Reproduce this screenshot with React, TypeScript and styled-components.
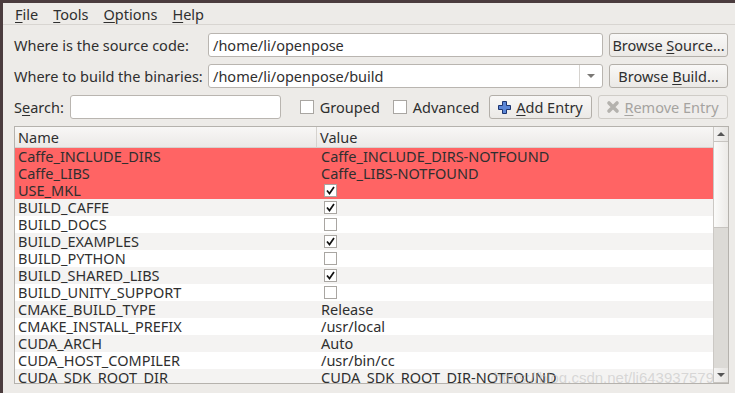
import React from 'react';
import styled, { createGlobalStyle } from 'styled-components';

const GlobalStyle = createGlobalStyle`
  html, body {
    margin: 0;
    padding: 0;
    background: #4b3c3e;
    overflow: hidden;
  }
  * {
    box-sizing: border-box;
  }
`;

const font = `"Noto Sans", "DejaVu Sans", sans-serif`;

const Desktop = styled.div`
  width: 735px;
  height: 393px;
  padding: 3px 0 0 3px;
  background: #4b3c3e;
`;

const Window = styled.div`
  width: 732px;
  height: 390px;
  background: #edebe8;
  font-family: ${font};
  font-size: 14.5px;
  color: #2f2f2f;
  display: flex;
  flex-direction: column;
  overflow: hidden;
`;

const MenuBar = styled.div`
  height: 22px;
  display: flex;
  align-items: center;
  gap: 15px;
  padding-left: 12px;
  border-bottom: 1px solid #d8d5d1;
  flex-shrink: 0;
`;

const MenuItem = styled.span`
  line-height: 20px;
`;

const Key = styled.u`
  text-decoration-thickness: 1px;
  text-underline-offset: 2px;
`;

const Content = styled.div`
  display: flex;
  flex-direction: column;
  gap: 7px;
  padding: 8px 4px 0 11px;
`;

const PathGrid = styled.div`
  display: grid;
  grid-template-columns: 188px 395px 119px;
  column-gap: 6px;
  row-gap: 7px;
  align-items: center;
`;

const Label = styled.span`
  white-space: nowrap;
  flex-shrink: 0;
`;

const TextField = styled.div<{ $width?: number; $gap?: number }>`
  height: 24px;
  ${p => (p.$width ? `width: ${p.$width}px;` : '')}
  margin-left: ${p => p.$gap ?? 0}px;
  flex-shrink: 0;
  background: #ffffff;
  border: 1px solid #b9b5b0;
  border-radius: 3px;
  display: flex;
  align-items: center;
  padding-left: 4px;
  white-space: nowrap;
  overflow: hidden;
`;

const ComboText = styled.span`
  flex: 1;
`;

const ComboArrow = styled.div`
  width: 23px;
  height: 100%;
  border-left: 1px solid #d6d3cf;
  display: flex;
  align-items: center;
  justify-content: center;
  &::after {
    content: '';
    border-left: 4px solid transparent;
    border-right: 4px solid transparent;
    border-top: 4px solid #7a7875;
  }
`;

const Button = styled.div<{ $disabled?: boolean; $width?: number; $gap?: number }>`
  height: 24px;
  ${p => (p.$width ? `width: ${p.$width}px;` : '')}
  margin-left: ${p => p.$gap ?? 0}px;
  flex-shrink: 0;
  border: 1px solid ${p => (p.$disabled ? '#cfccc7' : '#b3afa9')};
  border-radius: 3px;
  background: ${p => (p.$disabled ? '#efedeb' : 'linear-gradient(#f9f8f7, #ebe9e6)')};
  color: ${p => (p.$disabled ? '#a5a3a0' : '#2f2f2f')};
  display: flex;
  align-items: center;
  justify-content: center;
  gap: 4px;
  white-space: nowrap;
`;

const ToolRow = styled.div`
  display: flex;
  align-items: center;
  height: 24px;
`;

const CheckLabel = styled.label<{ $gap: number }>`
  display: flex;
  align-items: center;
  gap: 6px;
  margin-left: ${p => p.$gap}px;
  flex-shrink: 0;
`;

const Box = styled.span`
  width: 14px;
  height: 14px;
  border: 1px solid #a9a6a2;
  background: #ffffff;
  display: inline-flex;
  align-items: center;
  justify-content: center;
`;

const Table = styled.div`
  height: 258px;
  width: 715px;
  flex-shrink: 0;
  border: 1px solid #b5b2ad;
  background: #ffffff;
  display: flex;
  position: relative;
  overflow: hidden;
`;

const TableBody = styled.div`
  flex: 1;
  display: flex;
  flex-direction: column;
`;

const HeaderRow = styled.div`
  height: 21px;
  display: flex;
  background: linear-gradient(#f8f7f6, #ebe9e7);
  border-bottom: 1px solid #d5d2ce;
  flex-shrink: 0;
`;

const HeaderCell = styled.div<{ $first?: boolean }>`
  ${p => (p.$first ? 'width: 302px; border-right: 1px solid #d5d2ce;' : 'flex: 1;')}
  padding-left: 3px;
  line-height: 20px;
`;

const Row = styled.div<{ $tone: 'red' | 'gray' | 'white' }>`
  height: 17px;
  line-height: 17px;
  flex-shrink: 0;
  display: flex;
  align-items: center;
  background: ${p => (p.$tone === 'red' ? '#ff6464' : p.$tone === 'gray' ? '#f4f3f2' : '#ffffff')};
`;

const NameCell = styled.div`
  width: 302px;
  padding-left: 3px;
  white-space: nowrap;
`;

const ValueCell = styled.div`
  flex: 1;
  padding-left: 4px;
  white-space: nowrap;
  display: flex;
  align-items: center;
`;

const CellBox = styled(Box)`
  width: 13px;
  height: 13px;
  margin-left: 3px;
`;

const ScrollBar = styled.div`
  width: 15px;
  border-left: 1px solid #cbc8c4;
  display: flex;
  flex-direction: column;
  background: #dcdad6;
`;

const ScrollButton = styled.div<{ $down?: boolean }>`
  height: 15px;
  flex-shrink: 0;
  background: linear-gradient(90deg, #f4f3f2, #e6e4e1);
  border-bottom: 1px solid #c7c4c0;
  display: flex;
  align-items: center;
  justify-content: center;
  &::after {
    content: '';
    border-left: 4px solid transparent;
    border-right: 4px solid transparent;
    ${p => (p.$down ? 'border-top: 4px solid #555;' : 'border-bottom: 4px solid #555;')}
  }
`;

const Thumb = styled.div`
  height: 86px;
  background: linear-gradient(90deg, #fbfbfa, #eceae7);
  border-bottom: 1px solid #c7c4c0;
`;

const Track = styled.div`
  flex: 1;
`;

const Watermark = styled.span`
  position: absolute;
  right: 14px;
  bottom: -3px;
  font-family: "Liberation Sans", Arial, sans-serif;
  font-size: 15px;
  color: rgba(190, 190, 190, 0.55);
  pointer-events: none;
`;

const PlusIcon = () => (
  <svg width="15" height="15" viewBox="0 0 15 15">
    <path
      d="M5.5 1.5h4v4h4v4h-4v4h-4v-4h-4v-4h4z"
      fill="#5b86d6"
      stroke="#1d3470"
      strokeWidth="1"
      strokeLinejoin="round"
    />
  </svg>
);

const CrossIcon = () => (
  <svg width="14" height="14" viewBox="0 0 14 14">
    <path d="M3 3L11 11M11 3L3 11" stroke="#b4b2ae" strokeWidth="3.6" strokeLinecap="round" />
  </svg>
);

const Tick = () => (
  <svg width="11" height="11" viewBox="0 0 11 11">
    <path d="M2 5.5L4.5 8.5L9 2" fill="none" stroke="#111" strokeWidth="1.7" />
  </svg>
);

type Entry = { name: string; value?: string; check?: boolean; red?: boolean };

const entries: Entry[] = [
  { name: 'Caffe_INCLUDE_DIRS', value: 'Caffe_INCLUDE_DIRS-NOTFOUND', red: true },
  { name: 'Caffe_LIBS', value: 'Caffe_LIBS-NOTFOUND', red: true },
  { name: 'USE_MKL', check: true, red: true },
  { name: 'BUILD_CAFFE', check: true },
  { name: 'BUILD_DOCS', check: false },
  { name: 'BUILD_EXAMPLES', check: true },
  { name: 'BUILD_PYTHON', check: false },
  { name: 'BUILD_SHARED_LIBS', check: true },
  { name: 'BUILD_UNITY_SUPPORT', check: false },
  { name: 'CMAKE_BUILD_TYPE', value: 'Release' },
  { name: 'CMAKE_INSTALL_PREFIX', value: '/usr/local' },
  { name: 'CUDA_ARCH', value: 'Auto' },
  { name: 'CUDA_HOST_COMPILER', value: '/usr/bin/cc' },
  { name: 'CUDA_SDK_ROOT_DIR', value: 'CUDA_SDK_ROOT_DIR-NOTFOUND' },
];

const App: React.FC = () => {
  return (
    <Desktop>
      <GlobalStyle />
      <Window>
        <MenuBar>
          <MenuItem><Key>F</Key>ile</MenuItem>
          <MenuItem><Key>T</Key>ools</MenuItem>
          <MenuItem><Key>O</Key>ptions</MenuItem>
          <MenuItem><Key>H</Key>elp</MenuItem>
        </MenuBar>
        <Content>
          <PathGrid>
            <Label>Where is the source code:</Label>
            <TextField>/home/li/openpose</TextField>
            <Button><span>Browse <Key>S</Key>ource...</span></Button>
            <Label>Where to build the binaries:</Label>
            <TextField>
              <ComboText>/home/li/openpose/build</ComboText>
              <ComboArrow />
            </TextField>
            <Button><span>Browse <Key>B</Key>uild...</span></Button>
          </PathGrid>
          <ToolRow>
            <Label>S<Key>e</Key>arch:</Label>
            <TextField $width={211} $gap={6} />
            <CheckLabel $gap={19}><Box />Grouped</CheckLabel>
            <CheckLabel $gap={13}><Box />Advanced</CheckLabel>
            <Button $width={103} $gap={9}>
              <PlusIcon />
              <span><Key>A</Key>dd Entry</span>
            </Button>
            <Button $disabled $width={130} $gap={6}>
              <CrossIcon />
              <span><Key>R</Key>emove Entry</span>
            </Button>
          </ToolRow>
          <Table>
            <TableBody>
              <HeaderRow>
                <HeaderCell $first>Name</HeaderCell>
                <HeaderCell>Value</HeaderCell>
              </HeaderRow>
              {entries.map((e, i) => (
                <Row key={e.name} $tone={e.red ? 'red' : i % 2 === 1 ? 'gray' : 'white'}>
                  <NameCell>{e.name}</NameCell>
                  <ValueCell>
                    {e.check === undefined ? e.value : <CellBox>{e.check && <Tick />}</CellBox>}
                  </ValueCell>
                </Row>
              ))}
            </TableBody>
            <ScrollBar>
              <ScrollButton />
              <Thumb />
              <Track />
              <ScrollButton $down />
            </ScrollBar>
            <Watermark>https://blog.csdn.net/li643937579</Watermark>
          </Table>
        </Content>
      </Window>
    </Desktop>
  );
};

export default App;
